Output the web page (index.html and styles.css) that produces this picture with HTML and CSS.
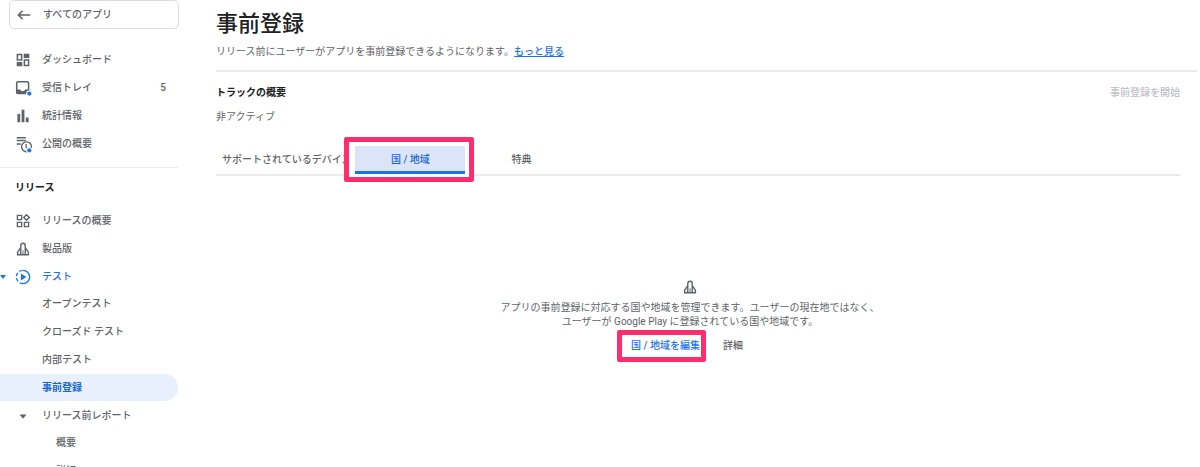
FILE: index.html
```html
<!DOCTYPE html>
<html lang="ja">
<head>
  <meta charset="UTF-8">
  <meta name="viewport" content="width=device-width, initial-scale=1.0">
  <title>事前登録</title>
  <link rel="stylesheet" href="styles.css">
</head>
<body>
  <svg class="sprite" aria-hidden="true">
    <symbol id="rocket" viewBox="1 1 22 22">
      <path d="M8.500 21V7c0-2.500 1.500-4 3.500-4s3.500 1.500 3.500 4v14M8.500 10L3.500 17v4h17v-4l-5-7" fill="none" stroke="currentColor" stroke-width="2.200"/>
      <path d="M12 14v7" fill="none" stroke="currentColor" stroke-width="1.500"/>
    </symbol>
  </svg>
  <div class="layout">
    <aside class="sidebar">
      <a class="back" href="#">
        <svg class="icon" viewBox="2 2 20 20"><path d="M21 12H4M10 6l-6 6 6 6" fill="none" stroke="currentColor" stroke-width="2.200"/></svg>
        すべてのアプリ
      </a>
      <nav>
        <ul class="menu">
          <li><a class="item" href="#">
            <svg class="icon" viewBox="2 2 20 20"><path d="M4 4h6v8H4zM14 12h6v8h-6z" fill="none" stroke="currentColor" stroke-width="2.200"/><path d="M13 3h8v6h-8zM3 15h8v6H3z" fill="currentColor"/></svg>
            ダッシュボード</a></li>
          <li><a class="item" href="#">
            <svg class="icon" viewBox="2 2 20 20"><rect x="3" y="3" width="17" height="17" rx="2" fill="none" stroke="currentColor" stroke-width="2.200"/><path d="M3 14h5c1 3 6 3 7 0h5v6H3z" fill="currentColor"/><circle cx="21" cy="20" r="4.500" fill="#fff"/><circle cx="21" cy="20" r="3" fill="#1a73e8"/></svg>
            受信トレイ <span class="count">5</span></a></li>
          <li><a class="item" href="#">
            <svg class="icon" viewBox="2 2 20 20"><path d="M4 9h4v12H4zM10 3h4v18h-4zM16 14h4v7h-4z" fill="currentColor"/></svg>
            統計情報</a></li>
          <li><a class="item" href="#">
            <svg class="icon" viewBox="2 2 20 20"><path d="M3 3h13M3 7h13M3 12h6" fill="none" stroke="currentColor" stroke-width="2"/><circle cx="17" cy="16" r="7" fill="#fff" stroke="currentColor" stroke-width="2"/><path d="M16.500 12v5l3 2" fill="none" stroke="currentColor" stroke-width="1.800"/><circle cx="21" cy="21" r="4.500" fill="#fff"/><circle cx="21" cy="21" r="3" fill="#1a73e8"/></svg>
            公開の概要</a></li>
        </ul>
        <h2 class="section">リリース</h2>
        <ul class="menu">
          <li><a class="item" href="#">
            <svg class="icon" viewBox="2 2 20 20"><path d="M4 4h6v6H4zM4 14h6v6H4zM14 14h6v6h-6zM17 3l4 4-4 4-4-4z" fill="none" stroke="currentColor" stroke-width="2"/></svg>
            リリースの概要</a></li>
          <li><a class="item" href="#">
            <svg class="icon"><use href="#rocket"/></svg>
            製品版</a></li>
          <li>
            <a class="item open" href="#">
              <svg class="icon" viewBox="2 2 20 20"><path d="M12 2.500a9.500 9.500 0 0 1 0 19" fill="none" stroke="currentColor" stroke-width="2"/><path d="M12 21.500a9.500 9.500 0 0 1 0-19" fill="none" stroke="currentColor" stroke-width="2" stroke-dasharray="5 3"/><path d="M9 7l8 5-8 5z" fill="currentColor"/></svg>
              テスト</a>
            <ul class="menu">
              <li><a class="item sub" href="#">オープンテスト</a></li>
              <li><a class="item sub" href="#">クローズド テスト</a></li>
              <li><a class="item sub" href="#">内部テスト</a></li>
              <li><a class="item sub current" href="#">事前登録</a></li>
              <li>
                <a class="item" href="#"><svg class="icon" viewBox="2 2 20 20"><path d="M7 10h10l-5 6z" fill="currentColor"/></svg>リリース前レポート</a>
                <ul class="menu">
                  <li><a class="item leaf" href="#">概要</a></li>
                  <li><a class="item leaf" href="#">詳細</a></li>
                </ul>
              </li>
            </ul>
          </li>
        </ul>
      </nav>
    </aside>

    <main class="main">
      <header class="header">
        <h1>事前登録</h1>
        <p>リリース前にユーザーがアプリを事前登録できるようになります。<a href="#">もっと見る</a></p>
      </header>
      <div class="content">
        <section class="summary">
          <div>
            <h2>トラックの概要</h2>
            <p>非アクティブ</p>
          </div>
          <button class="start" type="button" disabled>事前登録を開始</button>
        </section>
        <div class="tabs" role="tablist">
          <button class="tab" type="button" role="tab">サポートされているデバイス</button>
          <button class="tab selected" type="button" role="tab" aria-selected="true"><span>国 / 地域</span></button>
          <button class="tab" type="button" role="tab">特典</button>
        </div>
        <section class="empty">
          <svg class="icon"><use href="#rocket"/></svg>
          <p>アプリの事前登録に対応する国や地域を管理できます。ユーザーの現在地ではなく、<br>ユーザーが Google Play に登録されている国や地域です。</p>
          <div class="actions">
            <button class="edit" type="button">国 / 地域を編集</button>
            <button class="detail" type="button">詳細</button>
          </div>
        </section>
      </div>
    </main>
  </div>
</body>
</html>
```
FILE: styles.css
```css
* {
  box-sizing: border-box;
}
body {
  margin: 0;
  height: 100vh;
  overflow: hidden;
  background-color: #fff;
  color: #5f6368;
  font-family: Roboto, "Noto Sans CJK JP", sans-serif;
  font-size: 10px;
  font-weight: 500;
  line-height: 14px;
}
h1, h2, p, ul {
  margin: 0;
  padding: 0;
}
button {
  border: none;
  padding: 0;
  background: none;
  color: inherit;
  font: inherit;
}
a {
  color: inherit;
  text-decoration: none;
}
.sprite {
  display: none;
}
.icon {
  width: 14px;
  height: 14px;
  flex: none;
  overflow: visible;
}
.layout {
  display: flex;
}

/* Menú lateral */
.sidebar {
  width: 180px;
  flex: none;
}
.back {
  display: flex;
  align-items: center;
  gap: 12px;
  height: 29px;
  margin: 0 1px 17px 9px;
  padding: 0 7px;
  border: 1px solid #dadce0;
  border-radius: 5px;
}
.menu {
  display: flex;
  flex-direction: column;
  gap: 1px;
  list-style: none;
}
.item {
  position: relative;
  display: flex;
  align-items: center;
  gap: 12px;
  height: 27px;
  margin-right: 2px;
  padding: 0 12px 0 16px;
}
.count {
  margin-left: auto;
}
.section {
  margin: 10px 2px 12px 0;
  padding: 13px 15px 0;
  border-top: 1px solid #e8eaed;
  color: #202124;
  font-size: 10px;
  font-weight: 700;
}
.open {
  color: #1a73e8;
}
.open::before {
  content: "";
  position: absolute;
  left: 0;
  border: 3px solid transparent;
  border-top: 4px solid #1a73e8;
  border-bottom: none;
}
.sub {
  padding-left: 42px;
}
.leaf {
  padding-left: 56px;
}
.current {
  border-radius: 0 14px 14px 0;
  background-color: #e8f0fe;
  color: #1967d2;
  font-weight: 700;
}

/* Contenido */
.main {
  flex: 1;
  padding-left: 36px;
}
.header {
  margin-right: 3px;
  padding: 8px 0 11px;
  border-bottom: 2px solid #ebebeb;
}
.header h1 {
  margin-bottom: 5px;
  color: #202124;
  font-size: 22px;
  font-weight: 500;
  line-height: 32px;
}
.header p {
  font-weight: 400;
}
.header a {
  color: #1a73e8;
  font-weight: 500;
  text-decoration: underline;
}
.content {
  padding: 14px 20px 0 0;
}
.summary {
  display: flex;
  justify-content: space-between;
  align-items: flex-start;
}
.summary h2 {
  margin-bottom: 10px;
  color: #202124;
  font-size: 10px;
  font-weight: 700;
}
.summary p {
  font-weight: 400;
}
.start {
  color: #bdc1c6;
}
.tabs {
  display: flex;
  margin-top: 22px;
  border-bottom: 2px solid #ebebeb;
}
.tab {
  min-width: 110px;
  height: 28px;
  padding: 0 4px 0 6px;
}
.selected {
  position: relative;
  z-index: 0;
  padding: 0;
  color: #1967d2;
}
.selected span {
  display: block;
  border-bottom: 3px solid #1a73e8;
  padding: 7px 0 4px;
  background-color: #dce4f7;
}
/* Marco rosa alrededor de la pestaña */
.selected::before {
  content: "";
  position: absolute;
  z-index: -1;
  inset: -9px -9px -8px -11px;
  border: 5px solid #ff2d6b;
  border-radius: 2px;
  background-color: #fff;
}
.empty {
  display: flex;
  flex-direction: column;
  align-items: center;
  padding: 104px 16px 0 0;
  text-align: center;
}
.empty p {
  margin: 7px 0 1px;
  font-weight: 400;
}
.actions {
  display: flex;
  gap: 12px;
}
.edit {
  border: 5px solid #ff2d6b;
  border-radius: 2px;
  height: 32px;
  padding: 0 1px 0 9px;
  color: #1a73e8;
}
.detail {
  padding: 0 20px 0 5px;
}
```
